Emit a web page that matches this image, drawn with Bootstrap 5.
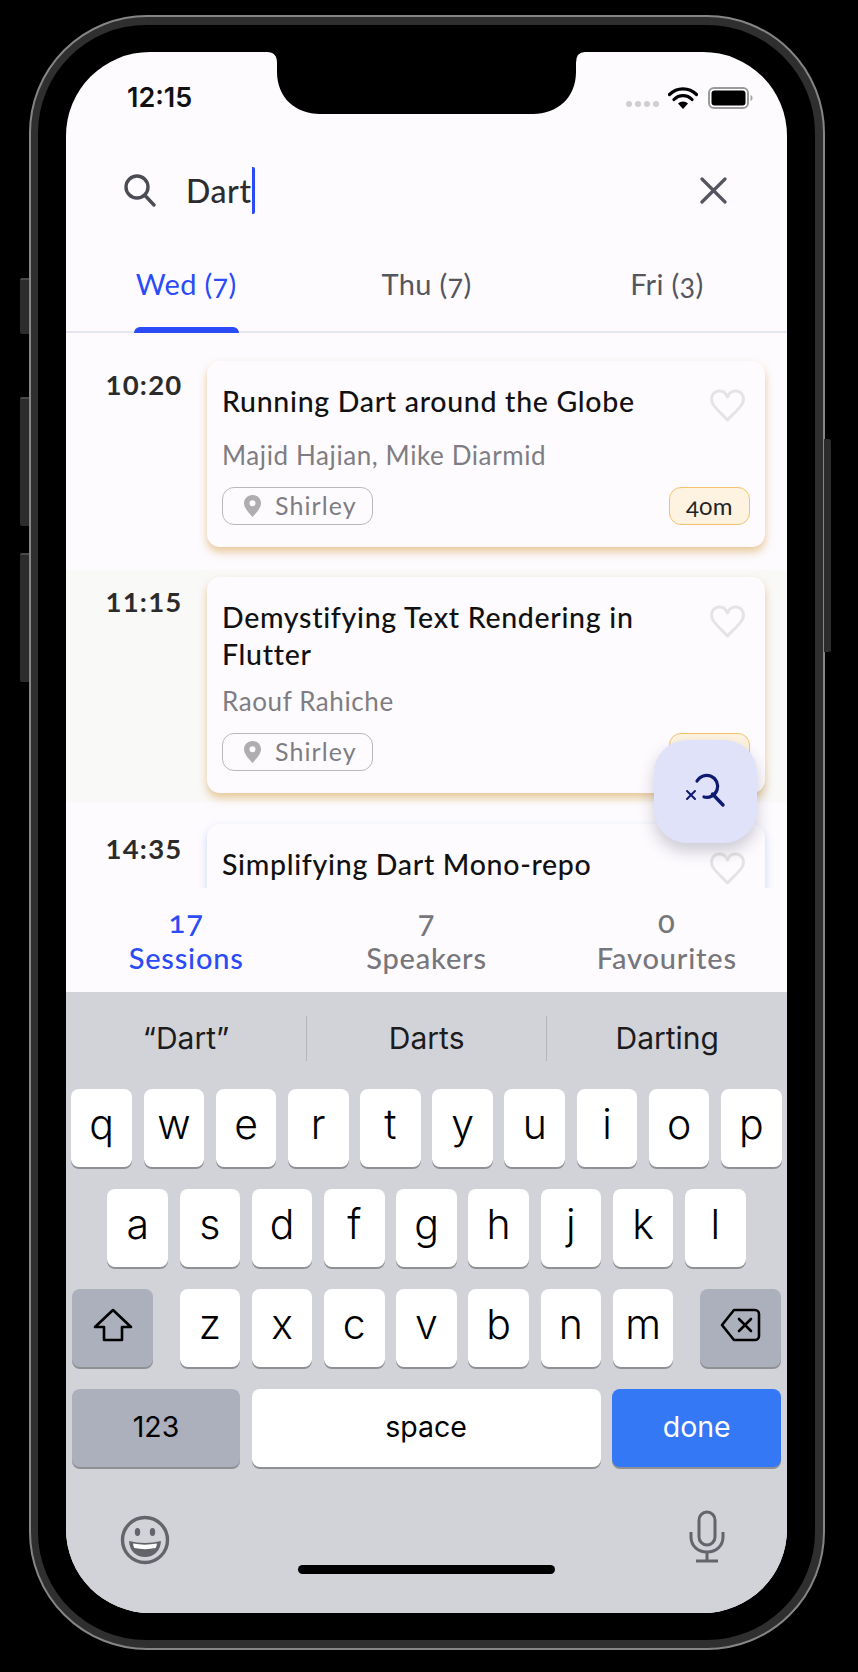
<!DOCTYPE html>
<html lang="en">
<head>
<meta charset="utf-8">
<title>Sessions search</title>
<link href="https://cdn.jsdelivr.net/npm/bootstrap@5.3.0/dist/css/bootstrap.min.css" rel="stylesheet">
<style>
html,body{background:#000;margin:0;height:1672px;overflow:hidden}
.device{position:relative;width:796px;height:1635px;margin:15px 0 0 29px;border:2px solid #858585;border-radius:118px;background:#2f2f2f;padding:8px 8px 8px 7px}
.side-btn{position:absolute;background:#2c2c2c;border-top:2px solid #4a4a4a;width:9px;border-radius:2px 0 0 2px}
.sb1{left:-11px;top:261px;height:56px}
.sb2{left:-11px;top:380px;height:129px}
.sb3{left:-11px;top:536px;height:129px}
.sb4{right:-8px;top:422px;height:213px;width:7px;border-radius:0 2px 2px 0;border-top:0}
.bezel{background:#000;height:100%;border-radius:108px;padding:27px 28px}
.screen{position:relative;width:721px;height:1561px;border-radius:84px;overflow:hidden;background:#fdfbfe;font-family:Lato,"Noto Sans",sans-serif;font-feature-settings:"onum" 1;display:flex;flex-direction:column}
.notch{position:absolute;left:200px;top:0;width:320px;height:62px}
.status-row{height:84px;padding:29px 34px 0 61px;flex:none}
.clock{font-family:Inter,sans-serif;font-weight:600;font-size:27px;line-height:34px;color:#111;font-feature-settings:normal}
.status-right{margin-top:6px}
.sig-dots{gap:3px;margin:14px 9px 0 0}
.sig-dots i{display:block;width:6px;height:6px;border-radius:50%;background:#cfcfcf}
.wifi-mark{margin-right:10px}
.search-row{height:108px;flex:none;padding:0 60px 0 57px}
.search-txt{margin-left:30px;font-size:32px;line-height:47px;font-weight:500;color:#2c2c2f;letter-spacing:.6px;height:47px;border-right:3.500px solid #2a4bf5;border-radius:0 2px 2px 0}
.day-tabs{height:89px;flex:none;border-bottom:2px solid #e6e6ee}
.day-tab{position:relative;color:#55555e;font-size:29px;line-height:40px;padding:20px 0 0;letter-spacing:.3px}
.day-tab:hover{color:#55555e}
.day-tab.on{color:#2a4bf5}
.day-tab.on:hover{color:#2a4bf5}
.day-tab.on::after{content:"";position:absolute;left:68px;bottom:-2px;width:105px;height:6px;background:#2a4bf5;border-radius:6px 6px 0 0}
.feed{height:555px;overflow:hidden;flex:none}
.slot{padding-right:22px}
.s1{padding-top:28px;padding-bottom:23px}
.s2{padding-top:7px;padding-bottom:9px;background:#f9f9f8}
.s3{padding-top:22px}
.slot-time{width:126px;margin-left:15px;flex:none;text-align:center;font-weight:700;font-size:27.500px;line-height:34px;color:#2b2b2b;letter-spacing:1.200px;font-feature-settings:"lnum" 1}
.t1{padding-top:7px}
.t2{padding-top:8px}
.sess-card{flex:1;min-width:0;background:#fdfbfe;border:0;border-radius:13px;padding:22px 15px 0 15px;box-shadow:0 5px 9px rgba(222,178,112,.7)}
.sess-card.cool{box-shadow:0 4px 9px rgba(150,180,235,.5)}
.c1{height:186px}
.c2{height:216px}
.c3{height:240px}
.sess-title{font-size:28.500px;line-height:37px;color:#111;font-weight:500;letter-spacing:.7px;margin:0;width:450px}
.heart{position:absolute;right:19px;top:28px;width:37px;height:33px}
.who{font-size:26px;line-height:34px;color:#7f7d83;letter-spacing:.6px;margin-top:18px}
.c2 .who{margin-top:11px}
.meta-row{position:absolute;left:15px;right:15px;bottom:22px}
.room{width:151px;height:38px;border:1px solid #b9b9bd;border-radius:12px;padding-left:20px;gap:13px;color:#7f7d83;font-size:25px;letter-spacing:1.100px}
.dur{width:81px;height:38px;border:1.500px solid #f4c26f;background:#fdf3e0;border-radius:12px;font-size:24px;color:#222;letter-spacing:.5px}
.fab{position:absolute;left:588px;top:688px;width:103px;height:103px;border-radius:33px;background:#e0e2fa;box-shadow:0 8px 16px rgba(30,30,60,.22)}
.count-bar{height:104px;flex:none;background:#fdfbfe;position:relative;padding-top:15px;text-align:center;font-weight:500;color:#77767c;font-size:29px;line-height:38px;letter-spacing:.8px}
.count-bar .active-count{color:#2a4bf5}
.count-bar b{display:block;font-weight:500;font-size:31px;line-height:36px;font-feature-settings:"onum" 1}
.kb{flex:1;background:#d1d3d9;font-family:Inter,"Liberation Sans",sans-serif;font-feature-settings:normal;color:#000}
.kb-suggest{height:97px;padding-top:24px;font-size:30px;color:#1c1c1e}
.kb-suggest>div{height:45px;line-height:45px}
.kb-suggest>div+div{border-left:1px solid #b4b6bc}
.kb-rows{padding:0 6px;gap:22px}
.kb-row{gap:11.600px;height:78px}
.kkey{width:60.600px;height:78px;background:#fff;border-radius:8px;box-shadow:0 2px 0 #8f9095;font-size:41px;font-weight:300;padding-bottom:6px;flex:none}
.kkey.fn{background:#acafbc}
.kkey.wide{width:81px}
.kkey.sm{font-size:28.500px;font-weight:400;padding-bottom:2px}
.k123{width:168px}
.kspace{width:349px}
.kdone{width:169px;background:#3478f6;color:#fff}
.kb-foot{padding:43px 62px 0 54px;height:98px}
.home-bar{width:257px;height:9px;border-radius:5px;background:#000;margin:0 auto}
</style>
</head>
<body>
<svg width="0" height="0" class="position-absolute">
  <defs>
    <symbol id="hrt" viewBox="0 0 37 33"><path d="M18.500 31C14 26 8 21 4.500 16 .5 10 3 2.500 10 2c4-.3 7 2 8.500 6C20 4 23 1.700 27 2c7 .5 9.500 8 5.500 14-3.500 5-9.500 10-14 15Z" fill="none" stroke="#e4e4e4" stroke-width="3" stroke-linejoin="round"/></symbol>
    <symbol id="pinmark" viewBox="0 0 19 22"><path fill-rule="evenodd" d="M9.500 0C4.500 0 1 3.800 1 8.300 1 13.500 7 19 9.500 22 12 19 18 13.500 18 8.300 18 3.800 14.500 0 9.500 0Zm0 5.300a3 3 0 1 1 0 6 3 3 0 0 1 0-6Z" fill="#aeaeb0"/></symbol>
  </defs>
</svg>
<div class="device">
  <span class="side-btn sb1"></span><span class="side-btn sb2"></span><span class="side-btn sb3"></span><span class="side-btn sb4"></span>
  <div class="bezel">
    <div class="screen">
      <div class="status-row d-flex justify-content-between align-items-start">
        <div class="clock">12:15</div>
        <div class="status-right d-flex align-items-start">
          <div class="sig-dots d-flex"><i></i><i></i><i></i><i></i></div>
          <svg width="30" height="22" viewBox="0 0 30 22" class="wifi-mark"><path d="M15 22l-5-5.500a7 7 0 0 1 10 0Z" fill="#000"/><path d="M1.500 7.500a19 19 0 0 1 27 0M6 12.500a12.500 12.500 0 0 1 18 0" fill="none" stroke="#000" stroke-width="3.200" stroke-linecap="round"/></svg>
          <svg width="45" height="22" viewBox="0 0 45 22"><rect x="1" y="1" width="39" height="20" rx="5" fill="none" stroke="#9a9a9a" stroke-width="2"/><rect x="3.500" y="3.500" width="34" height="15" rx="3" fill="#000"/><path d="M42.500 8c1.500.5 2 1.500 2 3s-.5 2.500-2 3Z" fill="#a5a5a5"/></svg>
        </div>
      </div>
      <div class="search-row d-flex align-items-center">
        <svg width="33" height="33" viewBox="0 0 33 33"><circle cx="14" cy="13" r="11" fill="none" stroke="#4c4c55" stroke-width="3.400"/><path d="M22 21.500L31 31" stroke="#4c4c55" stroke-width="3.400" stroke-linecap="round"/></svg>
        <div class="search-txt">Dart</div>
        <svg width="27" height="27" viewBox="0 0 27 27" class="ms-auto"><path d="M2 2l23 23M25 2L2 25" stroke="#55555f" stroke-width="3.200" stroke-linecap="round"/></svg>
      </div>
      <nav class="nav nav-justified day-tabs">
        <a class="nav-link day-tab on" href="#">Wed (7)</a>
        <a class="nav-link day-tab" href="#">Thu (7)</a>
        <a class="nav-link day-tab" href="#">Fri (3)</a>
      </nav>
      <div class="feed">
        <div class="slot s1 d-flex">
          <div class="slot-time t1">10:20</div>
          <div class="card sess-card c1">
            <h3 class="sess-title">Running Dart around the Globe</h3>
            <svg class="heart"><use href="#hrt"/></svg>
            <div class="who">Majid Hajian, Mike Diarmid</div>
            <div class="meta-row d-flex justify-content-between">
              <div class="room d-flex align-items-center"><svg width="19" height="22"><use href="#pinmark"/></svg>Shirley</div>
              <div class="dur d-flex align-items-center justify-content-center">40m</div>
            </div>
          </div>
        </div>
        <div class="slot s2 d-flex">
          <div class="slot-time t2">11:15</div>
          <div class="card sess-card c2">
            <h3 class="sess-title">Demystifying Text Rendering in Flutter</h3>
            <svg class="heart"><use href="#hrt"/></svg>
            <div class="who">Raouf Rahiche</div>
            <div class="meta-row d-flex justify-content-between">
              <div class="room d-flex align-items-center"><svg width="19" height="22"><use href="#pinmark"/></svg>Shirley</div>
              <div class="dur d-flex align-items-center justify-content-center">40m</div>
            </div>
          </div>
        </div>
        <div class="slot s3 d-flex">
          <div class="slot-time t2">14:35</div>
          <div class="card sess-card cool c3">
            <h3 class="sess-title">Simplifying Dart Mono-repo</h3>
            <svg class="heart"><use href="#hrt"/></svg>
          </div>
        </div>
      </div>
      <div class="count-bar row g-0">
        <div class="col-4 active-count"><b>17</b>Sessions</div>
        <div class="col-4"><b>7</b>Speakers</div>
        <div class="col-4"><b>0</b>Favourites</div>
      </div>
      <div class="kb">
        <div class="kb-suggest d-flex text-center">
          <div class="flex-fill w-100">“Dart”</div>
          <div class="flex-fill w-100">Darts</div>
          <div class="flex-fill w-100">Darting</div>
        </div>
        <div class="kb-rows d-flex flex-column">
          <div class="kb-row d-flex justify-content-center">
            <div class="kkey d-flex align-items-center justify-content-center">q</div><div class="kkey d-flex align-items-center justify-content-center">w</div><div class="kkey d-flex align-items-center justify-content-center">e</div><div class="kkey d-flex align-items-center justify-content-center">r</div><div class="kkey d-flex align-items-center justify-content-center">t</div><div class="kkey d-flex align-items-center justify-content-center">y</div><div class="kkey d-flex align-items-center justify-content-center">u</div><div class="kkey d-flex align-items-center justify-content-center">i</div><div class="kkey d-flex align-items-center justify-content-center">o</div><div class="kkey d-flex align-items-center justify-content-center">p</div>
          </div>
          <div class="kb-row d-flex justify-content-center">
            <div class="kkey d-flex align-items-center justify-content-center">a</div><div class="kkey d-flex align-items-center justify-content-center">s</div><div class="kkey d-flex align-items-center justify-content-center">d</div><div class="kkey d-flex align-items-center justify-content-center">f</div><div class="kkey d-flex align-items-center justify-content-center">g</div><div class="kkey d-flex align-items-center justify-content-center">h</div><div class="kkey d-flex align-items-center justify-content-center">j</div><div class="kkey d-flex align-items-center justify-content-center">k</div><div class="kkey d-flex align-items-center justify-content-center">l</div>
          </div>
          <div class="kb-row d-flex justify-content-between">
            <div class="kkey wide fn d-flex align-items-center justify-content-center"><svg width="40" height="34" viewBox="0 0 40 34"><path d="M20 2L2 19h9v13h18V19h9Z" fill="none" stroke="#000" stroke-width="2.600" stroke-linejoin="round"/></svg></div>
            <div class="d-flex kb-row">
              <div class="kkey d-flex align-items-center justify-content-center">z</div><div class="kkey d-flex align-items-center justify-content-center">x</div><div class="kkey d-flex align-items-center justify-content-center">c</div><div class="kkey d-flex align-items-center justify-content-center">v</div><div class="kkey d-flex align-items-center justify-content-center">b</div><div class="kkey d-flex align-items-center justify-content-center">n</div><div class="kkey d-flex align-items-center justify-content-center">m</div>
            </div>
            <div class="kkey wide fn d-flex align-items-center justify-content-center"><svg width="41" height="34" viewBox="0 0 41 34"><path d="M14 2h21a4 4 0 0 1 4 4v22a4 4 0 0 1-4 4H14L2 17Z" fill="none" stroke="#000" stroke-width="2.600" stroke-linejoin="round"/><path d="M19 11l12 12M31 11L19 23" stroke="#000" stroke-width="2.600" stroke-linecap="round"/></svg></div>
          </div>
          <div class="kb-row d-flex">
            <div class="kkey fn sm k123 d-flex align-items-center justify-content-center">123</div>
            <div class="kkey sm kspace d-flex align-items-center justify-content-center">space</div>
            <div class="kkey sm kdone d-flex align-items-center justify-content-center">done</div>
          </div>
        </div>
        <div class="kb-foot d-flex justify-content-between align-items-start">
          <svg width="50" height="52" viewBox="0 0 50 52" class="mt-1"><circle cx="25" cy="26" r="22.500" fill="none" stroke="#63656b" stroke-width="3.400"/><ellipse cx="17.500" cy="18" rx="2.700" ry="4" fill="#63656b"/><ellipse cx="32.500" cy="18" rx="2.700" ry="4" fill="#63656b"/><path d="M9 27c10 2.500 22 2.500 32 0-.5 10-7 16-16 16S9.500 37 9 27Z" fill="#63656b"/><path d="M13 29.500c8 1.500 16 1.500 24 0-.3 2-.8 3.500-1.500 4.500-7 1.500-14 1.500-21 0-.7-1-1.200-2.500-1.500-4.500Z" fill="#fff"/></svg>
          <svg width="36" height="53" viewBox="0 0 36 53"><rect x="10" y="2" width="16" height="33" rx="8" fill="none" stroke="#63656b" stroke-width="3"/><path d="M2 22v5c0 9 7 15 16 15s16-6 16-15v-5M18 42v8M7 51h22" fill="none" stroke="#63656b" stroke-width="3"/></svg>
        </div>
        <div class="home-bar"></div>
      </div>
      <svg class="notch" viewBox="0 0 320 62"><path d="M1 0Q11 0 11 11V20C11 46 30 62 54 62H267C291 62 310 46 310 20V11Q310 0 319 0Z" fill="#000"/></svg>
      <div class="fab d-flex align-items-center justify-content-center">
        <svg width="42" height="42" viewBox="0 0 42 42"><path d="M12 10A11 11 0 1 1 19 26" fill="none" stroke="#0d1a70" stroke-width="3.200" stroke-linecap="round"/><path d="M27.500 23L38 34" stroke="#0d1a70" stroke-width="3.400" stroke-linecap="round"/><path d="M2 20l8 8M10 20l-8 8" stroke="#0d1a70" stroke-width="2" stroke-linecap="round"/></svg>
      </div>
    </div>
  </div>
</div>
<script src="https://cdn.jsdelivr.net/npm/bootstrap@5.3.0/dist/js/bootstrap.bundle.min.js"></script>
</body>
</html>
